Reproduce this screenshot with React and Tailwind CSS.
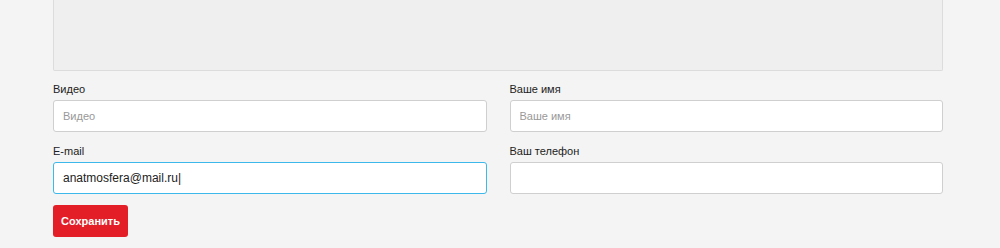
import React, { useState } from 'react'

const inputCls = 'block h-[32px] w-full rounded-[3px] border bg-white px-[9px] text-[12px] text-[#222] outline-none placeholder:text-[11px] placeholder:text-[#999] focus:border-[#3cb8ea]'

function Field({ label, value, placeholder, onChange, focused }) {
  return (
    <div className="flex flex-col">
      <label className="h-[29px] pt-[11px] text-[11px] leading-[14px] text-[#222]">{label}</label>
      <input
        type="text"
        value={value}
        placeholder={placeholder}
        onChange={(e) => onChange(e.target.value)}
        className={`${inputCls} ${focused ? 'border-[#3cb8ea]' : 'border-[#cfcfcf]'}`}
      />
    </div>
  )
}

export default function App() {
  const [form, setForm] = useState({ video: '', name: '', email: 'anatmosfera@mail.ru', phone: '' })
  const set = (k) => (v) => setForm({ ...form, [k]: v })

  return (
    <div className="min-h-[248px] bg-[#f4f4f4] font-['Liberation_Sans',Arial,sans-serif]">
      <div className="ml-[53px] w-[890px]">
        <div className="h-[71px] rounded-b-[2px] border-x border-b border-[#dcdcdc] bg-[#efefef]" />
        <div className="grid grid-cols-2 gap-x-[23px] gap-y-px">
          <Field label="Видео" placeholder="Видео" value={form.video} onChange={set('video')} />
          <Field label="Ваше имя" placeholder="Ваше имя" value={form.name} onChange={set('name')} />
          <Field label="E-mail" placeholder="E-mail" value={form.email + '|'} onChange={set('email')} focused />
          <Field label="Ваш телефон" placeholder="" value={form.phone} onChange={set('phone')} />
        </div>
        <button className="mt-[11px] h-[32px] w-[75px] rounded-[3px] bg-[#e41e26] text-[11px] font-bold text-white">
          Сохранить
        </button>
      </div>
    </div>
  )
}
